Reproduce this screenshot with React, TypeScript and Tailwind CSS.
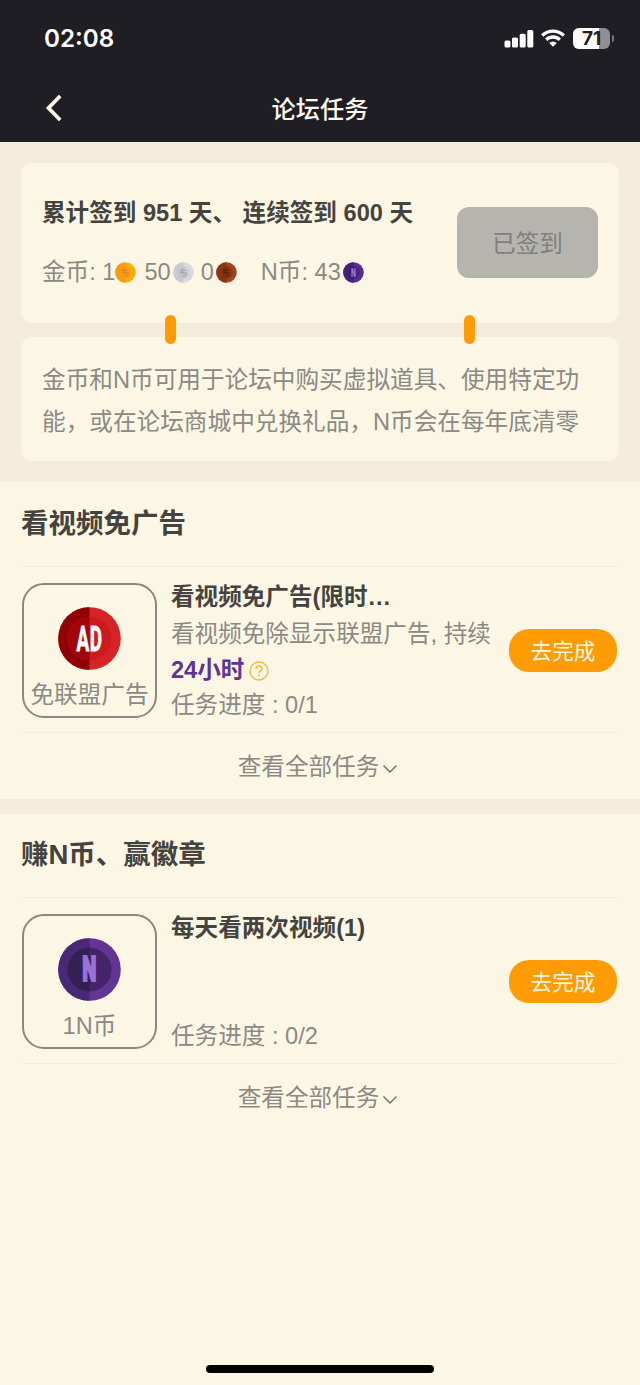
import type { ReactNode } from "react";

type CoinKind = "gold" | "silver" | "copper" | "n";

interface Task {
  title: string;
  desc?: ReactNode;
  progress: string;
  badge: "ad" | "n";
  badgeLabel: string;
}

const COIN_COLORS: Record<CoinKind, { left: string; right: string; inner: string; mark: string }> = {
  gold: { left: "#fb9a0c", right: "#ffae0c", inner: "#f59a1c", mark: "#cf7a2c" },
  silver: { left: "#cbcad0", right: "#dad9df", inner: "#c4c3ca", mark: "#96949f" },
  copper: { left: "#8a3716", right: "#a34420", inner: "#79300f", mark: "#471c0a" },
  n: { left: "#43207c", right: "#5a2d93", inner: "#38205f", mark: "#a077dc" },
};

function Coin({ kind }: { kind: CoinKind }) {
  const c = COIN_COLORS[kind];
  return (
    <svg viewBox="0 0 21 21" className="w-[21px] h-[21px] shrink-0">
      <circle cx="10.5" cy="10.5" r="10.3" fill={c.right} />
      <path d="M10.5 .2a10.3 10.3 0 0 0 0 20.6z" fill={c.left} />
      <circle cx="10.5" cy="10.5" r="6.4" fill={c.inner} opacity=".6" />
      {kind === "n" ? (
        <text
          transform="translate(10.5 14.8) scale(.58 1)"
          textAnchor="middle"
          fontFamily="Roboto, sans-serif"
          fontWeight="900"
          fontSize="12"
          fill={c.mark}
        >
          N
        </text>
      ) : (
        <path
          d="M6.8 9.4 9.6 7.4l3.2 1.4M7.2 11.6l2.4-1.8 1.6 1.6 2.6-.6M9.2 14l2.6.2 1.8-1.8"
          fill="none"
          stroke={c.mark}
          strokeWidth="1.1"
          opacity=".8"
        />
      )}
    </svg>
  );
}

function AdBadge() {
  return (
    <svg viewBox="0 0 63 63" className="w-[63px] h-[63px]">
      <circle cx="31.5" cy="31.5" r="31.3" fill="#d52428" />
      <path d="M31.5 .2a31.3 31.3 0 0 0 0 62.6z" fill="#8f0205" />
      <circle cx="31.5" cy="31.5" r="22" fill="#cd1a1f" />
      <path d="M31.5 9.5a22 22 0 0 0 0 44z" fill="#a20609" />
      <text
        transform="translate(31.6 43.6) scale(.54 1)"
        textAnchor="middle"
        fontFamily="Roboto, sans-serif"
        fontWeight="700"
        fontSize="35"
        letterSpacing="1"
        fill="#fff"
        stroke="#fff"
        strokeWidth=".8"
      >
        AD
      </text>
    </svg>
  );
}

function NBadge() {
  return (
    <svg viewBox="0 0 63 63" className="w-[63px] h-[63px]">
      <circle cx="31.5" cy="31.5" r="31.3" fill="#643495" />
      <path d="M31.5 .2a31.3 31.3 0 0 0 0 62.6z" fill="#4a2878" />
      <circle cx="31.5" cy="31.5" r="22" fill="#442569" />
      <path d="M31.5 9.5a22 22 0 0 0 0 44z" fill="#35214f" />
      <text
        transform="translate(31.2 43.4) scale(.58 1)"
        textAnchor="middle"
        fontFamily="Roboto, sans-serif"
        fontWeight="900"
        fontSize="34.5"
        fill="#9d70d8"
        stroke="#9d70d8"
        strokeWidth="2"
      >
        N
      </text>
    </svg>
  );
}

function StatusIcons() {
  return (
    <div className="flex items-center">
      <svg viewBox="0 0 30 19" className="w-[30px] h-[19px]" fill="#fff">
        <rect x="0.5" y="11.5" width="6" height="7" rx="1.6" />
        <rect x="8" y="8.5" width="6" height="10" rx="1.6" />
        <rect x="15.7" y="4.8" width="6" height="13.7" rx="1.6" />
        <rect x="23.3" y="1" width="6" height="17.5" rx="1.6" />
      </svg>
      <svg viewBox="0 0 24 18" className="ml-[7px] w-[24px] h-[18px]" fill="none" stroke="#fff" strokeWidth="3.3">
        <path d="M1.2 6.5a15.6 15.6 0 0 1 21.6 0" />
        <path d="M5.2 10.8a9.7 9.7 0 0 1 13.6 0" />
        <path d="M8.2 14a5.4 5.4 0 0 1 7.6 0L12 17.8z" fill="#fff" stroke="none" />
      </svg>
      <div className="ml-2 relative flex w-[37px] h-[21px] rounded-[6px] overflow-hidden bg-[#8f8e93]">
        <div className="w-[26px] bg-white" />
        <span className="absolute inset-0 text-center font-[Inter] font-bold text-[19px] leading-[21px] text-[#1f1e25]">
          71
        </span>
      </div>
      <div className="ml-[1.5px] w-[2.5px] h-[7px] rounded-r-full bg-[#77767c]" />
    </div>
  );
}

function TaskSection({ heading, headClass, task }: { heading: string; headClass: string; task: Task }) {
  return (
    <section className="px-[21px]">
      <h2 className={`flex items-center text-[27.5px] font-bold text-[#454340] ${headClass}`}>{heading}</h2>
      <div className="flex h-[167px] border-y border-[#f5eedd] pt-4 pl-px">
        <div className="w-[135px] h-[135px] shrink-0 rounded-[22px] border-2 border-[#8a8883] flex flex-col items-center pt-[22px]">
          {task.badge === "ad" ? <AdBadge /> : <NBadge />}
          <span className="mt-2 text-[23.6px] leading-[34px] whitespace-nowrap">{task.badgeLabel}</span>
        </div>
        <div className="ml-[14px] w-[330px] h-[143px] -mt-1 flex flex-col whitespace-nowrap">
          <h3 className="text-[23.6px] leading-[36px] font-bold text-[#454340]">{task.title}</h3>
          {task.desc}
          <p className="mt-auto leading-[34px]">{task.progress}</p>
        </div>
        <button className="ml-[8px] mt-[46px] w-[108px] h-[43px] shrink-0 rounded-[20px] bg-[#ff9c05] text-[#fdf6e3] text-[21.6px] leading-[45px]">
          去完成
        </button>
      </div>
      <button className="flex w-full h-[66px] items-center justify-center pt-1 pr-1">
        查看全部任务
        <svg viewBox="0 0 16 10" className="ml-[3px] mt-[2px] w-4 h-[10px]" fill="none" stroke="#6f6d69" strokeWidth="1.4">
          <path d="M1.5 1.5 8 8l6.5-6.5" />
        </svg>
      </button>
    </section>
  );
}

const adTask: Task = {
  title: "看视频免广告(限时…",
  desc: (
    <>
      <p className="leading-[38px]">看视频免除显示联盟广告, 持续</p>
      <p className="flex items-center leading-[35px]">
        <b className="text-[#5f3494]">24小时</b>
        <svg viewBox="0 0 20 20" className="ml-[5px] w-5 h-5" fill="none" stroke="#f3bb3c" strokeWidth="1.4">
          <circle cx="10" cy="10" r="9" />
          <path d="M7.1 8c0-1.9 1.2-3 2.9-3s2.9 1.1 2.9 2.7c0 2.1-2.8 2.2-2.8 4.3" strokeWidth="1.6" />
          <path d="M10.1 13.5v1.7" strokeWidth="1.7" />
        </svg>
      </p>
    </>
  ),
  progress: "任务进度 : 0/1",
  badge: "ad",
  badgeLabel: "免联盟广告",
};

const nTask: Task = {
  title: "每天看两次视频(1)",
  progress: "任务进度 : 0/2",
  badge: "n",
  badgeLabel: "1N币",
};

export default function App() {
  return (
    <div className="relative flex flex-col w-[640px] h-[1385px] overflow-hidden bg-[#fcf7e4] text-[#8b8984] text-[23.6px] font-['Liberation_Sans','Noto_Sans_CJK_SC',sans-serif]">
      <header className="h-[142px] bg-[#1f1e25]">
        <div className="flex h-[76px] items-center justify-between pl-[44px] pr-[26px]">
          <span className="mt-[2px] font-[Inter] font-semibold text-[24.2px] text-white">02:08</span>
          <StatusIcons />
        </div>
        <div className="relative flex h-[66px] items-center justify-center">
          <svg
            viewBox="0 0 18 28"
            className="absolute left-[45px] top-[18px] w-[18px] h-7"
            fill="none"
            stroke="#fdf8ea"
            strokeWidth="3.8"
          >
            <path d="M15.2 2 3.5 14l11.7 12" />
          </svg>
          <h1 className="mt-[2px] text-[24.2px] font-medium text-[#fdf8ea]">论坛任务</h1>
        </div>
      </header>

      <div className="h-[340px] bg-[#f4eddc] px-[21px] pt-[21px]">
        <div className="relative flex h-[160px] justify-between rounded-xl bg-[#fcf7e4] px-[21px]">
          <div className="whitespace-nowrap">
            <p className="mt-[32px] leading-[36px] font-bold text-[#454340]">累计签到 951 天、 连续签到 600 天</p>
            <div className="mt-[23px] flex h-[36px] items-center">
              <span className="mt-[2px]">金币: 1</span>
              <Coin kind="gold" />
              <span className="ml-[8px] mr-[2px] mt-[2px]">50</span>
              <Coin kind="silver" />
              <span className="ml-[7px] mr-[2px] mt-[2px]">0</span>
              <Coin kind="copper" />
              <span className="ml-[24px] mr-[2px] mt-[2px]">N币: 43</span>
              <Coin kind="n" />
            </div>
          </div>
          <button className="mt-[44px] w-[141px] h-[71px] rounded-xl bg-[#b5b4ae] pt-1 text-[#817f7b]">已签到</button>
          {/* binder pins joining the two cards */}
          <i className="absolute left-[144px] top-[152px] w-[11px] h-[29px] rounded-full bg-[#ff9c05]" />
          <i className="absolute left-[443px] top-[152px] w-[11px] h-[29px] rounded-full bg-[#ff9c05]" />
        </div>
        <p className="mt-[14px] h-[124px] rounded-xl bg-[#fcf7e4] px-[21px] pt-[22px] text-[23.65px] leading-[42px] whitespace-nowrap">
          金币和N币可用于论坛中购买虚拟道具、使用特定功
          <br />
          能，或在论坛商城中兑换礼品，N币会在每年底清零
        </p>
      </div>

      <TaskSection heading="看视频免广告" headClass="h-[84px]" task={adTask} />
      <div className="h-[15px] bg-[#f4eddc]" />
      <TaskSection heading="赚N币、赢徽章" headClass="h-[83px] pb-[2px]" task={nTask} />

      <div className="absolute left-[206px] bottom-[12px] w-[228px] h-2 rounded-full bg-black" />
    </div>
  );
}
